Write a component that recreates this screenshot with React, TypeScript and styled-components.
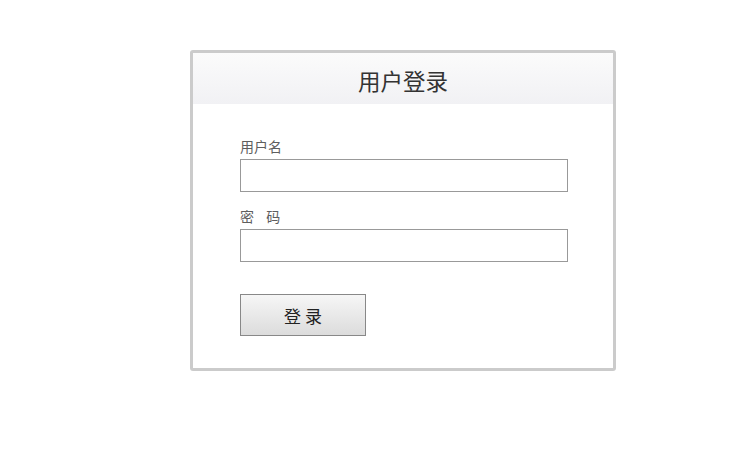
import styled, { createGlobalStyle } from 'styled-components'

const GlobalStyle = createGlobalStyle`
  html, body {
    margin: 0;
    padding: 0;
    background: #fff;
    font-family: "Noto Sans CJK SC", "Noto Sans", sans-serif;
  }
`

const Page = styled.div`
  padding: 50px 0 0 190px;
`

const Card = styled.div`
  width: 420px;
  border: 3px solid #cbcbcb;
  border-radius: 3px;
  background: #fff;
`

const Header = styled.div`
  box-sizing: border-box;
  height: 51px;
  padding-top: 4px;
  display: flex;
  align-items: center;
  justify-content: center;
  background: linear-gradient(to bottom, #fbfbfb, #f1f1f4);
`

const Title = styled.h1`
  margin: 0;
  font-size: 22.5px;
  font-weight: 400;
  color: #333;
  line-height: 1;
`

const Form = styled.form`
  padding: 33px 0 32px 47px;
  display: flex;
  flex-direction: column;
`

const Field = styled.div<{ $gap?: number }>`
  display: flex;
  flex-direction: column;
  gap: 4px;
  margin-bottom: ${({ $gap }) => $gap ?? 0}px;
`

const Label = styled.label<{ $spread?: boolean }>`
  font-size: 14px;
  line-height: 18px;
  color: #5e5e5e;
  word-spacing: ${({ $spread }) => ($spread ? '9px' : 'normal')};
`

const Input = styled.input`
  box-sizing: border-box;
  width: 328px;
  height: 33px;
  margin: 0;
  border: 1px solid #999;
  padding: 0 6px;
  font-size: 14px;
  outline: none;
`

const Button = styled.button`
  box-sizing: border-box;
  width: 126px;
  height: 42px;
  border: 1px solid #888;
  background: linear-gradient(to bottom, #f6f6f6, #dcdcdc);
  font-family: inherit;
  font-size: 17px;
  color: #222;
  letter-spacing: 4px;
  padding: 0 0 0 4px;
  cursor: pointer;
`

export default function App() {
  return (
    <>
      <GlobalStyle />
      <Page>
        <Card>
          <Header>
            <Title>用户登录</Title>
          </Header>
          <Form onSubmit={(e) => e.preventDefault()}>
            <Field $gap={15}>
              <Label htmlFor="username">用户名</Label>
              <Input id="username" type="text" />
            </Field>
            <Field $gap={32}>
              <Label htmlFor="password" $spread>
                密 码
              </Label>
              <Input id="password" type="password" />
            </Field>
            <div>
              <Button type="submit">登录</Button>
            </div>
          </Form>
        </Card>
      </Page>
    </>
  )
}
